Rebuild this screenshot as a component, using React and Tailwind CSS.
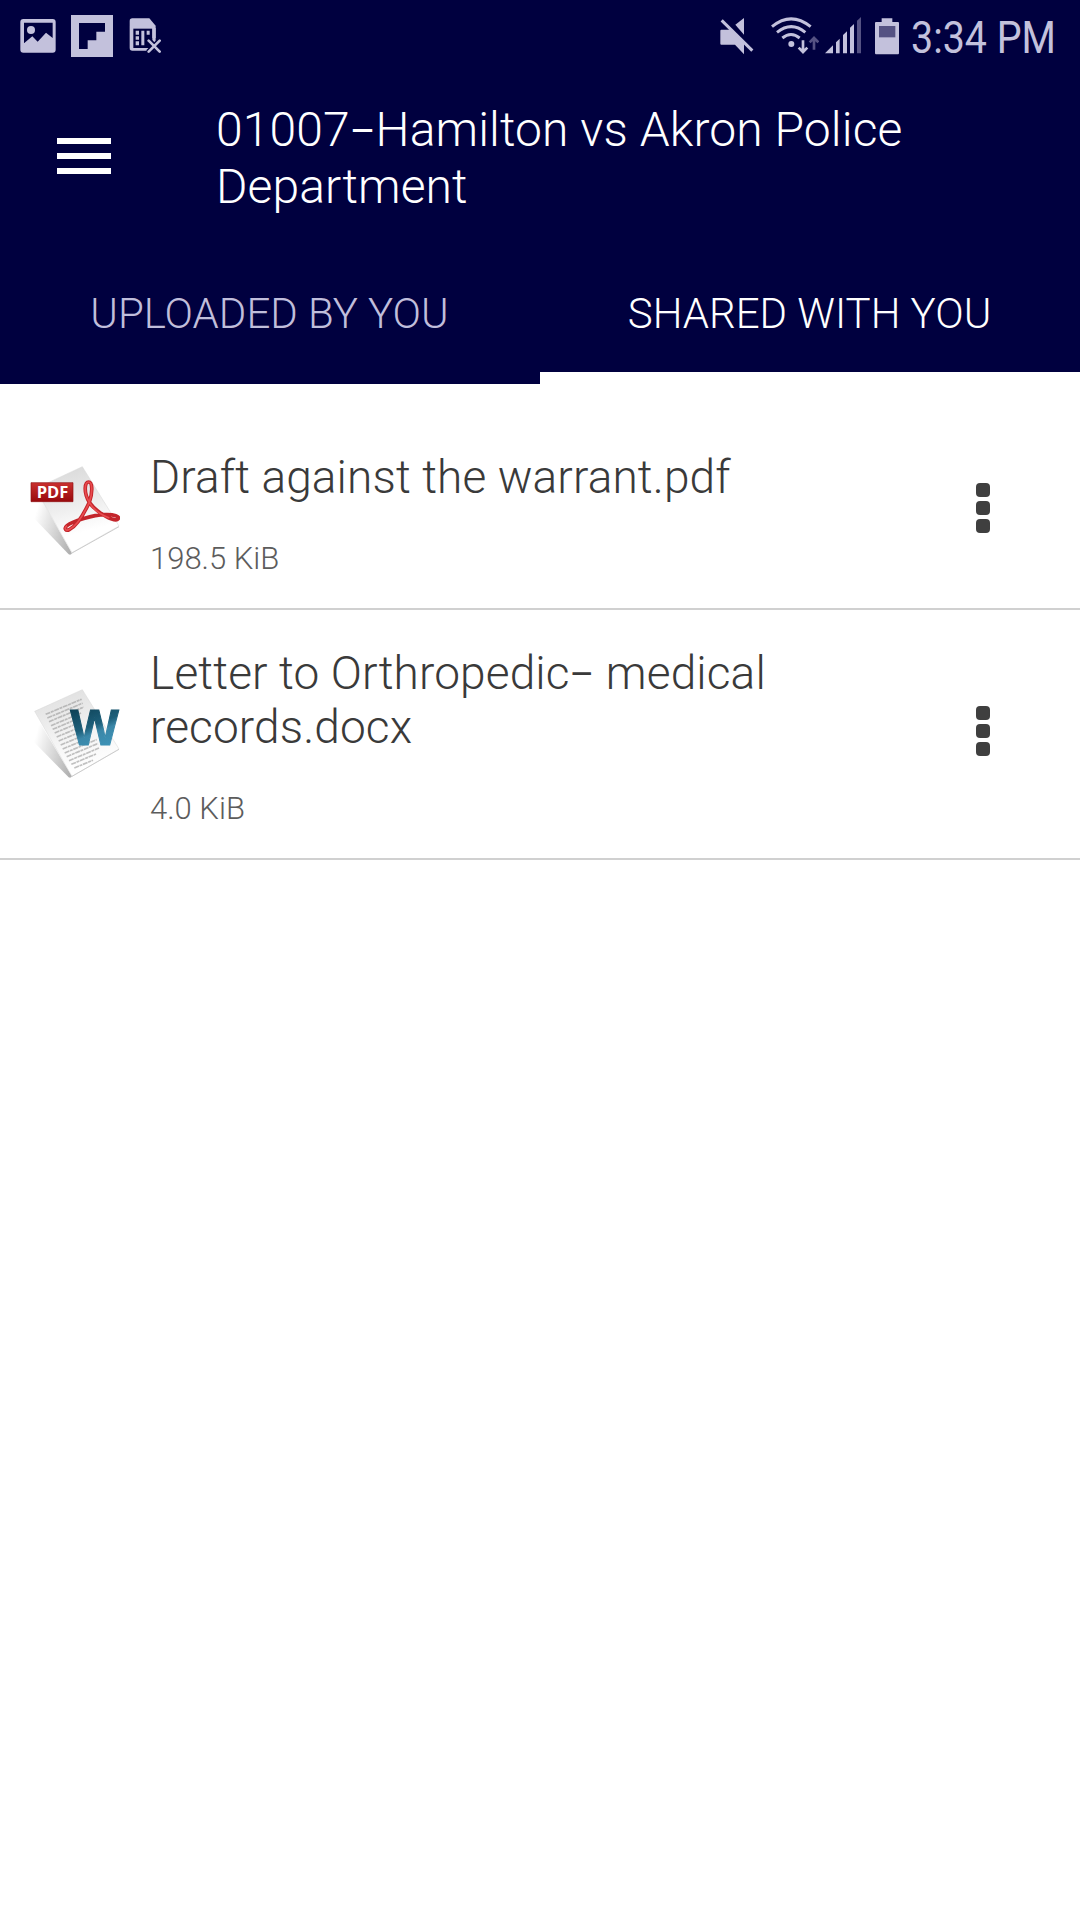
import React, { useState } from 'react'

const FILES = [
  { name: 'Draft against the warrant.pdf', size: '198.5 KiB', type: 'pdf' },
  { name: 'Letter to Orthropedic– medical records.docx', size: '4.0 KiB', type: 'docx' },
]

const TABS = ['UPLOADED BY YOU', 'SHARED WITH YOU']

// draws the en dash a little shorter than the font's own
function DashedText({ text }) {
  const [before, after] = text.split('–')
  if (after === undefined) return text
  return <>{before}<span className="align-[0.05em] text-[0.82em] leading-none font-normal">–</span>{after}</>
}

function StatusBar() {
  return (
    <div className="flex h-[72px] items-start justify-between pl-5 pr-6 text-[#c3c1dc]">
      <div className="flex pt-[14px]">
        {/* gallery */}
        <svg className="mt-1 h-9 w-[36px]" viewBox="60 54 108 108" fill="currentColor">
          <path fillRule="evenodd" d="M70 57h88q9 0 9 9v83q0 9-9 9H70q-9 0-9-9V66q0-9 9-9zm2 11v62l25-21 16 16 25-27 20 16V68z" />
          <circle cx="93" cy="90" r="12" />
        </svg>
        {/* flipboard */}
        <svg className="ml-[15px] mt-[1px] h-[42px] w-[42px]" viewBox="213 45 126 126">
          <path fill="currentColor" d="M213 45h126v126H213z" />
          <path fill="#00003f" d="M237 69h78v26h-26v26h-26v26h-26z" />
        </svg>
        {/* sim card missing */}
        <svg className="ml-[16px] mt-1 h-9 w-8" viewBox="387 54 96 108">
          <path fill="currentColor" d="M397 55h51l19 22v75H397q-8 0-8-8V63q0-8 8-8z" />
          <path fill="#00003f" d="M400 86h57v58h-57z" />
          <g fill="currentColor">
            <path d="M407 92h10v12h-10zM424 92h9v12h-9zM440 92h9v12h-9zM407 109h10v10h-10zM424 104h9v32h-9zM407 124h10v12h-10zM457 84h10v30h-10z" />
          </g>
          <path d="M445 121l36 36M481 121l-36 36" stroke="#00003f" strokeWidth="18" />
          <path d="M446 122l33 33M479 122l-33 33" stroke="currentColor" strokeWidth="8" strokeLinecap="round" />
        </svg>
      </div>
      <div className="flex pt-[14px]">
        {/* muted */}
        <svg className="mt-[3px] h-[38px] w-[34px]" viewBox="62 50 102 114">
          <path fill="currentColor" d="M108 73l26-20v50z" />
          <path d="M72 56l91 91" stroke="#00003f" strokeWidth="9" />
          <path fill="currentColor" d="M66 88h27l41 40v34l-27-29H66q-3 0-3-3V91q0-3 3-3z" />
          <path d="M67 60l92 91" stroke="currentColor" strokeWidth="9" />
        </svg>
        {/* wifi with traffic arrows */}
        <svg className="ml-[17px] mt-[3px] h-[38px] w-[48px]" viewBox="213 50 144 114" fill="none" stroke="currentColor" strokeWidth="9">
          <path d="M216 79Q273 32 332 79M231 96Q274 62 316 96M247 113Q273 92 299 113" />
          <circle cx="274" cy="131" r="9" fill="currentColor" stroke="none" />
          <path d="M309 120v33M296 142l13 13 13-13" strokeWidth="8" />
          <path d="M342 148v-33M329 126l13-13 13 13" strokeWidth="8" stroke="#555283" />
        </svg>
        {/* cell signal */}
        <svg className="ml-[6px] mt-[3px] h-[38px] w-[36px]" viewBox="375 50 108 114" fill="currentColor">
          <path d="M375 159l24-24v24zM408 126l11-11v44h-11zM429 104l12-11v66h-12zM450 82l12-11v88h-12z" />
          <path fill="#555283" d="M471 61l12-11v109h-12z" />
        </svg>
        {/* battery */}
        <svg className="ml-[14px] mt-[3px] h-[38px] w-6" viewBox="525 50 72 114">
          <path fill="currentColor" d="M545 54h32v11h17q3 0 3 3v90q0 4-3 4h-66q-3 0-3-4V68q0-3 3-3h17z" />
          <path fill="#555283" d="M537 77h49v34h-49z" />
        </svg>
        <div className="ml-3 w-[145px]">
          <span className="block origin-left scale-x-[0.895] whitespace-nowrap text-[44px] leading-[48px]">3:34 PM</span>
        </div>
      </div>
    </div>
  )
}

function PdfIcon() {
  return (
    <svg className="h-[90px] w-[90px]" viewBox="90 78 270 270">
      <defs>
        <linearGradient id="pdfPage" x1="0" y1="0" x2="0.25" y2="1">
          <stop offset="0" stopColor="#d6d6d6" />
          <stop offset="0.55" stopColor="#eeeeee" />
          <stop offset="0.85" stopColor="#ffffff" />
        </linearGradient>
        <linearGradient id="pdfShade" x1="0.05" y1="0.45" x2="1" y2="0.8">
          <stop offset="0" stopColor="#ffffff" />
          <stop offset="1" stopColor="#b0b0b0" />
        </linearGradient>
        <linearGradient id="pdfTag" x1="0" y1="0" x2="0" y2="1">
          <stop offset="0" stopColor="#c9302f" />
          <stop offset="1" stopColor="#98090d" />
        </linearGradient>
      </defs>
      <path fill="url(#pdfShade)" d="M90 222q10-25 38-37l88 155q-4 7-10 3z" />
      <path fill="url(#pdfPage)" stroke="#d6d6d6" strokeWidth="1.5" d="M247 80l110 178-141 80L106 146z" />
      <path d="M216 339l141-79" stroke="#cccccc" strokeWidth="3" />
      <path fill="url(#pdfTag)" stroke="#8f1114" strokeWidth="2" d="M93 128h126v57H93z" />
      <text x="110" y="174" textLength="95" lengthAdjust="spacingAndGlyphs" fill="#fff" fontFamily="Open Sans" fontWeight="700" fontSize="48">PDF</text>
      <g fill="none" strokeLinejoin="round">
        <path stroke="#c3252b" strokeWidth="11" d="M268 187C249 154 255 126 266 126C277 126 279 155 268 187C250 225 228 259 209 268C197 275 191 265 201 257C219 243 279 225 315 224C343 223 360 229 354 237C347 248 293 222 268 187z" />
        <path stroke="#e94c4f" strokeWidth="5" d="M268 187C249 154 255 126 266 126C277 126 279 155 268 187C250 225 228 259 209 268C197 275 191 265 201 257M268 187C280 207 300 224 328 234" />
      </g>
    </svg>
  )
}

function DocxIcon() {
  // rows of text on the tilted page: x, y, length
  const lines = [
    [137, 163, 108], [142, 174, 106], [147, 185, 104], [153, 197, 90], [158, 208, 78], [164, 219, 70], [170, 231, 66],
    [176, 243, 62], [182, 255, 68], [188, 267, 76], [194, 279, 96], [200, 290, 94], [207, 302, 90], [214, 313, 74], [223, 324, 56],
  ]

  return (
    <svg className="h-[90px] w-[90px]" viewBox="90 87 270 270">
      <defs>
        <linearGradient id="docPage" x1="0" y1="0" x2="0.25" y2="1">
          <stop offset="0" stopColor="#dddddd" />
          <stop offset="0.6" stopColor="#f3f3f3" />
          <stop offset="1" stopColor="#ffffff" />
        </linearGradient>
        <linearGradient id="docShade" x1="0.05" y1="0.45" x2="1" y2="0.8">
          <stop offset="0" stopColor="#ffffff" />
          <stop offset="1" stopColor="#b0b0b0" />
        </linearGradient>
        <linearGradient id="docLetter" x1="0" y1="0" x2="0.35" y2="1">
          <stop offset="0.15" stopColor="#0d4156" />
          <stop offset="0.55" stopColor="#1d5f7a" />
          <stop offset="0.68" stopColor="#3b87a8" />
          <stop offset="1" stopColor="#3c93b8" />
        </linearGradient>
      </defs>
      <path fill="url(#docShade)" d="M90 234q8-26 32-42l94 157q-4 7-10 3z" />
      <path fill="url(#docPage)" stroke="#d6d6d6" strokeWidth="1.5" d="M247 89l110 178-141 82L104 154z" />
      <path d="M216 349l141-81" stroke="#cccccc" strokeWidth="3" />
      {lines.map(([x, y, len]) => (
        <path key={y} d={`M${x} ${y}l${len} ${-len * 0.42}`} stroke="#9a9a9a" strokeWidth="5" strokeDasharray="15 2 9 2" opacity="0.6" />
      ))}
      <text x="211" y="256" textLength="146" lengthAdjust="spacingAndGlyphs" fill="url(#docLetter)" stroke="url(#docLetter)" strokeWidth="3" fontFamily="Liberation Sans" fontWeight="700" fontSize="149">W</text>
    </svg>
  )
}

function FileRow({ file }) {
  return (
    <li className="flex items-center border-b-2 border-[#d0d0d0] pb-[31px] pl-[30px] pr-[90px] pt-9">
      <div className="mb-1.5 shrink-0">
        {file.type === 'pdf' ? <PdfIcon /> : <DocxIcon />}
      </div>
      <div className="ml-[30px] w-[660px]">
        <p className="text-[46px] leading-[54px] tracking-[0.12px] text-[#3a3a3a]">
          <DashedText text={file.name} />
        </p>
        <p className="mt-[37px] text-[31px] leading-9 text-[#5c5c5c]">{file.size}</p>
      </div>
      <button aria-label="More options" className="mb-[11px] ml-auto flex flex-col gap-1">
        <span className="size-3.5 rounded-[4px] bg-[#3f3f3f]" />
        <span className="size-3.5 rounded-[4px] bg-[#3f3f3f]" />
        <span className="size-3.5 rounded-[4px] bg-[#3f3f3f]" />
      </button>
    </li>
  )
}

export default function App() {
  const [active, setActive] = useState(1)

  return (
    <div className="min-h-[1920px] w-[1080px] bg-white font-['Roboto',sans-serif]">
      <header className="flex h-96 flex-col bg-[#00003f]">
        <StatusBar />
        <div className="flex h-[184px] pl-[57px]">
          <button aria-label="Menu" className="mt-[66px] flex w-[54px] flex-col gap-[9px]">
            <span className="h-1.5 w-full bg-white" />
            <span className="h-1.5 w-full bg-white" />
            <span className="h-1.5 w-full bg-white" />
          </button>
          <h1 className="ml-[105px] mt-[29px] w-[740px] text-[48px] font-light leading-[57px] tracking-[0.1px] text-white">
            <DashedText text="01007–Hamilton vs Akron Police Department" />
          </h1>
        </div>
        <nav className="flex h-32">
          {TABS.map((tab, i) => (
            <button
              key={tab}
              onClick={() => setActive(i)}
              className={`flex-1 border-b-[12px] pb-[2px] pr-[1px] text-[42px] font-light ${
                active === i ? 'border-white text-white' : 'border-transparent text-[#c0bedb]'
              }`}
            >
              {tab}
            </button>
          ))}
        </nav>
      </header>
      <ul className="pt-[30px] font-light">
        {FILES.map(file => <FileRow key={file.name} file={file} />)}
      </ul>
    </div>
  )
}
